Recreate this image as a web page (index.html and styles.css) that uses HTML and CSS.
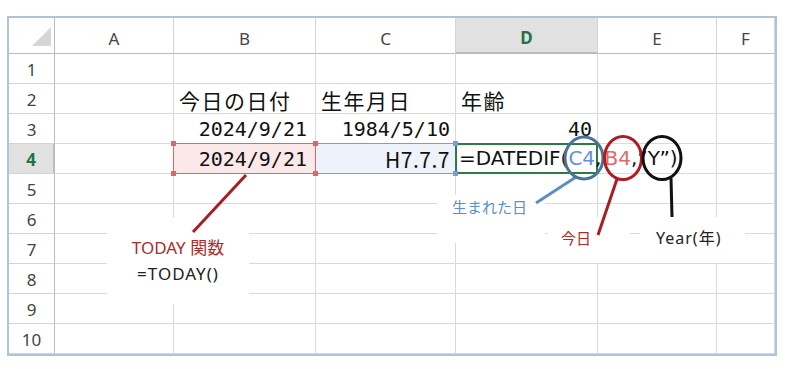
FILE: index.html
```html
<!DOCTYPE html>
<html lang="ja">
<head>
<meta charset="utf-8">
<title>DATEDIF</title>
<link rel="stylesheet" href="styles.css">
</head>
<body>
<div class="page">
  <div class="sheet">
    <div class="grid">
      <div class="hdr corner"><span class="tri"></span></div>
      <div class="hdr col">A</div>
      <div class="hdr col">B</div>
      <div class="hdr col">C</div>
      <div class="hdr col active-col">D</div>
      <div class="hdr col">E</div>
      <div class="hdr col">F</div>

      <div class="hdr row">1</div>
      <div class="cell"></div><div class="cell"></div><div class="cell"></div><div class="cell"></div><div class="cell"></div><div class="cell"></div>

      <div class="hdr row">2</div>
      <div class="cell"></div>
      <div class="cell jp">今日の日付</div>
      <div class="cell jp">生年月日</div>
      <div class="cell jp">年齢</div>
      <div class="cell"></div><div class="cell"></div>

      <div class="hdr row">3</div>
      <div class="cell"></div>
      <div class="cell num b-col">2024/9/21</div>
      <div class="cell num">1984/5/10</div>
      <div class="cell num">40</div>
      <div class="cell"></div><div class="cell"></div>

      <div class="hdr row active-row">4</div>
      <div class="cell"></div>
      <div class="cell num b-col ref-b-cell"><span class="h tl"></span><span class="h tr"></span><span class="h bl"></span><span class="h br"></span>2024/9/21</div>
      <div class="cell num ref-c-cell"><span class="h tr blue"></span><span class="h br blue"></span>H7.7.7</div>
      <div class="cell formula-cell"><span class="formula">=DATEDIF(<span class="ref-c">C4</span>,<span class="ref-b">B4</span>,”Y”)</span></div>
      <div class="cell"></div><div class="cell"></div>

      <div class="hdr row">5</div>
      <div class="cell"></div><div class="cell"></div><div class="cell"></div><div class="cell"></div><div class="cell"></div><div class="cell"></div>
      <div class="hdr row">6</div>
      <div class="cell"></div><div class="cell"></div><div class="cell"></div><div class="cell"></div><div class="cell"></div><div class="cell"></div>
      <div class="hdr row">7</div>
      <div class="cell"></div><div class="cell"></div><div class="cell"></div><div class="cell"></div><div class="cell"></div><div class="cell"></div>
      <div class="hdr row">8</div>
      <div class="cell"></div><div class="cell"></div><div class="cell"></div><div class="cell"></div><div class="cell"></div><div class="cell"></div>
      <div class="hdr row">9</div>
      <div class="cell"></div><div class="cell"></div><div class="cell"></div><div class="cell"></div><div class="cell"></div><div class="cell"></div>
      <div class="hdr row">10</div>
      <div class="cell"></div><div class="cell"></div><div class="cell"></div><div class="cell"></div><div class="cell"></div><div class="cell"></div>
    </div>
  </div>

  <div class="note note-today">
    <div class="note-red">TODAY 関数</div>
    <div class="note-black">=TODAY()</div>
  </div>
  <div class="note note-born"><span class="note-blue">生まれた日</span></div>
  <div class="note note-kyou"><span class="note-red">今日</span></div>
  <div class="note note-year"><span class="note-black">Year(年)</span></div>

  <svg class="overlay" width="794" height="369" viewBox="0 0 794 369">
    <line x1="246" y1="175" x2="193" y2="232" stroke="#a81e22" stroke-width="3"/>
    <line x1="576" y1="177" x2="536" y2="203" stroke="#5b8fc4" stroke-width="3"/>
    <line x1="617" y1="179" x2="598" y2="235" stroke="#a81e22" stroke-width="3"/>
    <line x1="671" y1="178" x2="672" y2="217" stroke="#111" stroke-width="3"/>
    <ellipse cx="584" cy="158" rx="19" ry="21" fill="none" stroke="#4a7398" stroke-width="3"/>
    <ellipse cx="623" cy="158" rx="18.5" ry="21.5" fill="none" stroke="#b01c22" stroke-width="3"/>
    <ellipse cx="662" cy="158" rx="19" ry="21.5" fill="none" stroke="#111" stroke-width="3"/>
  </svg>
</div>
</body>
</html>
```

FILE: styles.css
```css
* { box-sizing: border-box; }
html, body { margin: 0; padding: 0; background: #fff; }
body { font-family: "Noto Sans CJK JP", "Noto Sans", sans-serif; }

.page {
  position: relative;
  width: 794px;
  height: 369px;
  overflow: hidden;
  background: #fff;
}

.sheet {
  margin: 16px 0 0 7px;
  width: 770px;
  border: 2px solid #adc3da;
  background: #fff;
}

.grid {
  display: grid;
  grid-template-columns: 46px 119px 142px 140px 142px 119px 58px;
  grid-template-rows: 36px repeat(10, 30px);
}

.hdr {
  display: flex;
  align-items: flex-end;
  justify-content: center;
  font-family: "Noto Sans", sans-serif;
  font-size: 17px;
  line-height: 20px;
  color: #444;
  background: #fff;
  border-right: 1px solid #d4d4d4;
  border-bottom: 1px solid #d4d4d4;
}
.hdr.col { padding-bottom: 4px; border-bottom-color: #bcbcbc; }
.hdr.row { padding-bottom: 3px; border-right-color: #bcbcbc; }
.hdr.corner { position: relative; border-bottom-color: #bcbcbc; border-right-color: #bcbcbc; }
.tri {
  position: absolute;
  right: 3px;
  bottom: 7px;
  width: 0; height: 0;
  border-left: 19px solid transparent;
  border-bottom: 19px solid #d6d6d6;
}
.active-col {
  background: #e1e1e1;
  color: #217346;
  font-weight: bold;
  border-bottom: 2px solid #217346;
  padding-bottom: 3px;
}
.active-row {
  background: #e1e1e1;
  color: #217346;
  font-weight: bold;
  border-right: 2px solid #217346;
}

.cell {
  position: relative;
  display: flex;
  align-items: flex-end;
  padding: 0 5px 1px 5px;
  border-right: 1px solid #dadada;
  border-bottom: 1px solid #dadada;
  font-size: 21px;
  line-height: 26px;
  color: #111;
  white-space: nowrap;
}
.jp { letter-spacing: 1.5px; padding-bottom: 0; }
.num { justify-content: flex-end; font-family: "DejaVu Sans Mono", monospace; font-size: 20px; padding-bottom: 1px; }
.b-col { padding-right: 8px; }

.ref-b-cell {
  background: #fbe8e8;
  border: 1px solid #e06666;
  margin: -1px 0 0 -1px;
}
.ref-c-cell {
  background: #edf2fb;
  border-top: 1px solid #7b9bd9;
  border-bottom: 1px solid #7b9bd9;
  border-right: 1px solid #7b9bd9;
  margin-top: -1px;
  font-family: "Noto Sans CJK JP", sans-serif;
  font-size: 21px;
  letter-spacing: 0.5px;
}
.h {
  position: absolute;
  width: 5px; height: 5px;
  background: #e06666;
  z-index: 2;
}
.h.blue { background: #7b9bd9; }
.h.tl { left: -3px; top: -3px; }
.h.tr { right: -3px; top: -3px; }
.h.bl { left: -3px; bottom: -3px; }
.h.br { right: -3px; bottom: -3px; }

.formula-cell {
  overflow: visible;
  border: 2px solid #2c7a44;
  margin: -1px 0 0 -1px;
  padding-left: 2px;
  z-index: 1;
  background: #fff;
}
.formula { font-family: "DejaVu Sans", sans-serif; font-size: 20px; position: relative; }
.ref-c { color: #6a8fd8; }
.ref-b { color: #e06a6a; margin-left: 3px; }

.note {
  position: absolute;
  background: #fff;
  font-family: "Noto Sans", "Noto Sans CJK JP", sans-serif;
  font-size: 15px;
  line-height: 20px;
}
.note-red { color: #b02a2a; }
.note-black { color: #222; }
.note-blue { color: #5b8fc8; font-family: "Noto Sans CJK JP", sans-serif; }
.note-today {
  left: 107px; top: 217px; width: 142px; height: 87px;
  display: flex; flex-direction: column; align-items: center;
  padding-top: 21px; gap: 6px; font-size: 17px;
}
.note-today .note-black { letter-spacing: 1px; }
.note-born { left: 437px; top: 195px; width: 108px; height: 48px; padding: 2px 0 0 15px; }
.note-kyou { left: 548px; top: 217px; width: 82px; height: 46px; padding: 11px 0 0 13px; }
.note-kyou .note-red { font-family: "Noto Sans CJK JP", sans-serif; }
.note-year { left: 640px; top: 217px; width: 105px; height: 46px; padding: 11px 0 0 16px; font-size: 16px; letter-spacing: 1px; }

.overlay {
  position: absolute;
  left: 0; top: 0;
  z-index: 5;
  pointer-events: none;
}
```
